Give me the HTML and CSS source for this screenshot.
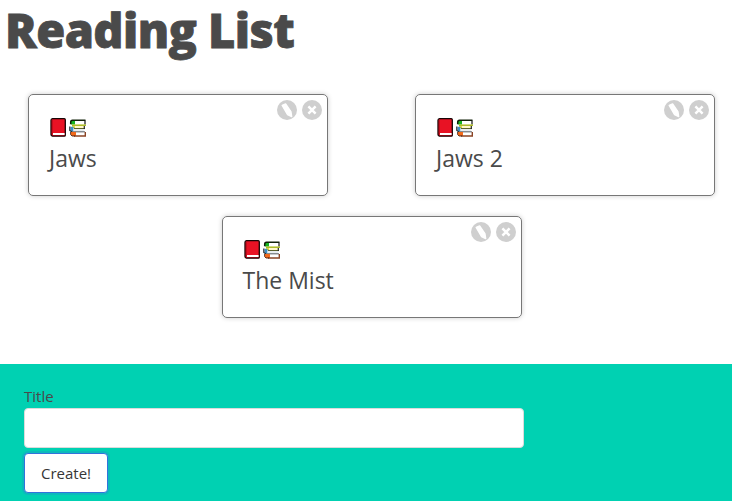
FILE: index.html
```html
<!DOCTYPE html>
<html lang="en">
<head>
<meta charset="utf-8">
<title>Reading List</title>
<link rel="stylesheet" href="styles.css">
</head>
<body>
<svg class="sprites" aria-hidden="true">
  <symbol id="books" viewBox="0 0 37 19">
    <path d="M2.5 .7H14.3Q15.3.7 15.3 1.7V17.3Q15.3 18.2 14.3 18.2H2.5Q1 18 1 16.5V2.3Q1 .8 2.5.7Z" fill="#e81224" stroke="#170505" stroke-width="1.3"/>
    <path d="M2 2V16" stroke="#8d0713" stroke-width=".8"/>
    <path d="M3 15H14.6V17H3Z" fill="#fff"/>
    <path d="M23 2.3H35V7H23Z" fill="#fff"/>
    <path d="M21 2.2H25V6.5H21Z" fill="#16b321"/>
    <path d="M35.5 2.2H22.5Q20.7 2.3 20.7 4.2V6.3" fill="none" stroke="#102008" stroke-width="1.5"/>
    <path d="M35 2.5V6.5" stroke="#111" stroke-width="1.2"/>
    <path d="M22 7.2H36" stroke="#a9b91d" stroke-width="1.5"/>
    <path d="M25 8.1H35V10.2H25Z" fill="#fff8c9"/>
    <path d="M22 8.2H25V10H22Z" fill="#d4d525"/>
    <path d="M24 10.6H35" stroke="#4b5216" stroke-width="1"/>
    <path d="M20.5 8.8H23.5V13.3H20.5Z" fill="#3b8fc7"/>
    <path d="M23.5 11.1H34V14H23.5Z" fill="#e8edf1"/>
    <path d="M19.8 8.5V12.5L22 14H35M34.3 8V11" fill="none" stroke="#252a2e" stroke-width="1.2"/>
    <path d="M25.5 14.5H35V17.3H25.5Z" fill="#fff"/>
    <path d="M21 14H26V18H22L20.8 16.8Z" fill="#f26a1b"/>
    <path d="M24 18H36M35.3 14V17.5" stroke="#8a4425" stroke-width="1.4"/>
    <path d="M20.6 14V16.6L22 18H25" fill="none" stroke="#522310" stroke-width=".9"/>
  </symbol>
  <symbol id="edit" viewBox="0 0 20 20">
    <circle cx="10" cy="10" r="10" fill="#cfcfcf"/>
    <path d="M5.2 5.3 8.6 3.9 13.9 11.6 14.7 16.6 10.6 14.6Z" fill="#fff" stroke="#fff" stroke-width="1.4" stroke-linejoin="round"/>
  </symbol>
  <symbol id="close" viewBox="0 0 20 20">
    <circle cx="10" cy="10" r="10" fill="#cfcfcf"/>
    <path d="M6.4 6.4 13.6 13.6M13.6 6.4 6.4 13.6" stroke="#fff" stroke-width="2.5"/>
  </symbol>
</svg>
<h1 class="heading">Reading List</h1>
<main class="cards">
  <article class="card">
    <div class="actions"><svg><use href="#edit"/></svg><svg><use href="#close"/></svg></div>
    <svg class="books"><use href="#books"/></svg>
    <h2 class="name">Jaws</h2>
  </article>
  <article class="card">
    <div class="actions"><svg><use href="#edit"/></svg><svg><use href="#close"/></svg></div>
    <svg class="books"><use href="#books"/></svg>
    <h2 class="name">Jaws 2</h2>
  </article>
  <article class="card">
    <div class="actions"><svg><use href="#edit"/></svg><svg><use href="#close"/></svg></div>
    <svg class="books"><use href="#books"/></svg>
    <h2 class="name">The Mist</h2>
  </article>
</main>
<form class="create">
  <label class="label" for="title">Title</label>
  <input class="input" id="title" type="text">
  <button class="button" type="button">Create!</button>
</form>
</body>
</html>
```
FILE: styles.css
```css
* { box-sizing: border-box; }
body {
  margin: 0;
  height: 501px;
  overflow: hidden;
  display: flex;
  flex-direction: column;
  background: #fff;
  color: #4a4a4a;
  font-family: "Segoe UI", "Open Sans", "Noto Sans", sans-serif;
  font-size: 16px;
}
.sprites { display: none; }
.heading {
  margin: 0;
  padding: 3px 0 0 5px;
  height: 84px;
  font-size: 47px;
  font-weight: 800;
  line-height: 54px;
  letter-spacing: -0.6px;
  white-space: nowrap;
  -webkit-text-stroke: 0.8px #4a4a4a;
}
.cards {
  height: 280px;
  padding: 10px 0 0 11px;
  display: flex;
  flex-wrap: wrap;
  align-content: flex-start;
  justify-content: center;
  gap: 20px 87px;
}
.card {
  position: relative;
  width: 300px;
  height: 102px;
  padding: 23px 20px 0;
  border: 1px solid #777;
  border-radius: 5px;
  box-shadow: 0 0 5px rgba(0, 0, 0, .2);
}
.actions {
  position: absolute;
  top: 5px;
  right: 5px;
  display: flex;
  gap: 5px;
}
.actions svg { width: 20px; height: 20px; }
.books { display: block; width: 37px; height: 19px; margin-left: 1px; }
.name {
  margin: 4px 0 0;
  font-size: 23px;
  font-weight: 400;
  line-height: 34px;
}
.create {
  flex: 1;
  padding: 21px 24px 0;
  display: flex;
  flex-direction: column;
  align-items: flex-start;
  background: #00d1b2;
}
.label { height: 23px; line-height: 22px; font-size: 15px; }
.input {
  width: 500px;
  height: 40px;
  border: 1px solid #dbdbdb;
  border-radius: 4px;
  background: #fff;
}
.button {
  margin-top: 5px;
  width: 84px;
  height: 40px;
  padding: 0;
  border: 1px solid #3273dc;
  border-radius: 4px;
  box-shadow: 0 0 0 2px rgba(50, 115, 220, .25);
  background: #fff;
  color: #363636;
  font-family: inherit;
  font-size: 15px;
}
```
